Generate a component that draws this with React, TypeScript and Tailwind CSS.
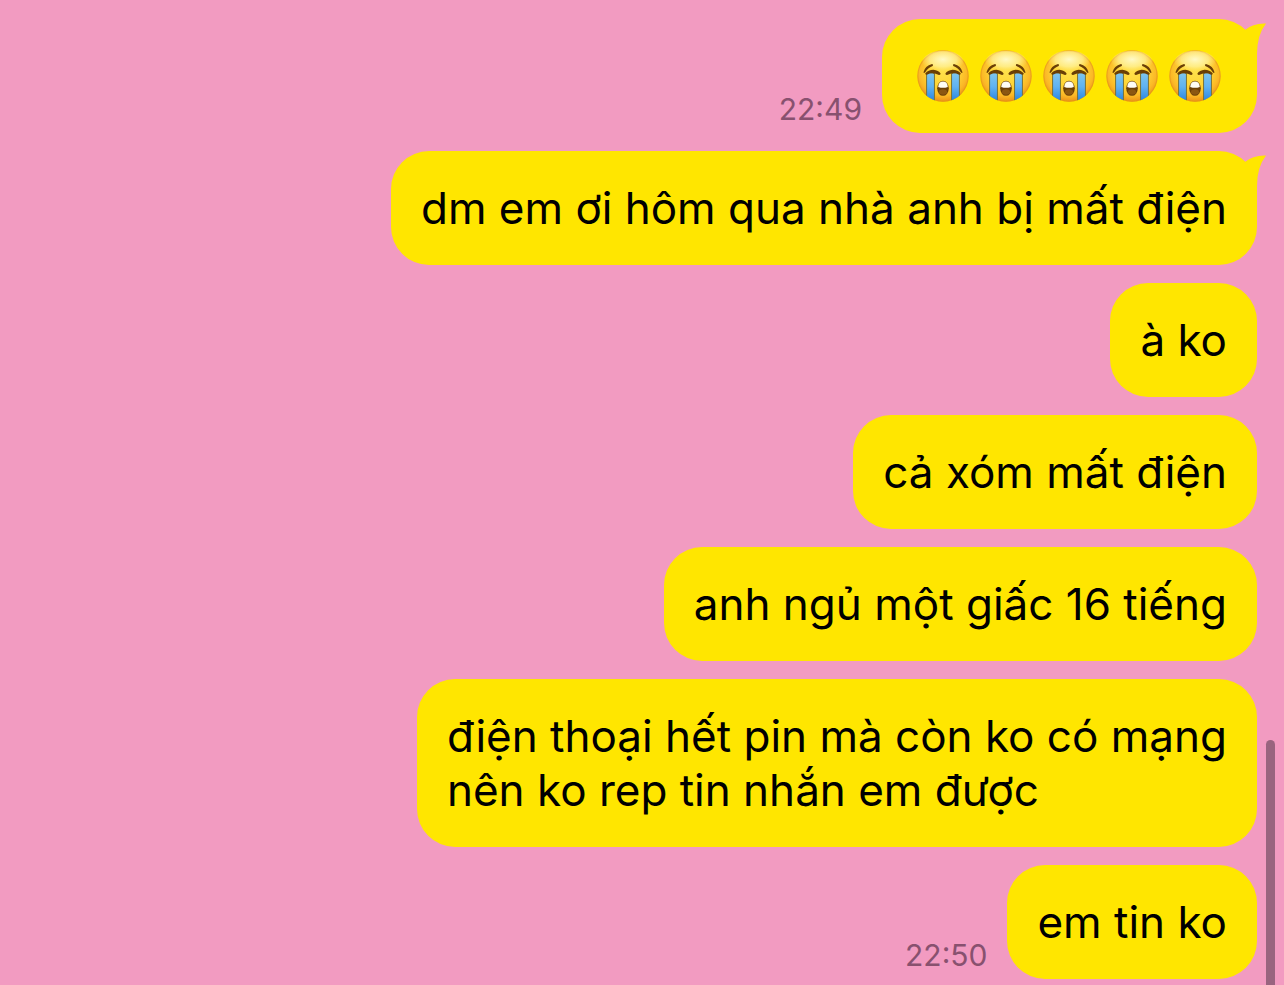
import { useId } from "react";

function CryingFace() {
  const id = useId().replace(/[^a-zA-Z0-9]/g, "");
  return (
    <svg viewBox="0 0 152 152" className="size-[52px]" aria-hidden="true">
      <defs>
        <radialGradient id={`${id}face`} cx="50%" cy="42%" r="60%">
          <stop offset="0" stopColor="#ffe04a" />
          <stop offset="0.5" stopColor="#ffd435" />
          <stop offset="0.78" stopColor="#fbb826" />
          <stop offset="1" stopColor="#ea8a14" />
        </radialGradient>
        <radialGradient id={`${id}shine`} cx="50%" cy="40%" r="55%">
          <stop offset="0" stopColor="#fffbd0" stopOpacity="0.95" />
          <stop offset="0.6" stopColor="#fff6a8" stopOpacity="0.65" />
          <stop offset="1" stopColor="#ffee80" stopOpacity="0" />
        </radialGradient>
        <linearGradient id={`${id}tear`} x1="0" y1="0" x2="0" y2="1">
          <stop offset="0" stopColor="#7fc6ee" />
          <stop offset="0.45" stopColor="#5fb2f2" />
          <stop offset="1" stopColor="#1f7bdc" />
        </linearGradient>
        <clipPath id={`${id}clip`}>
          <circle cx="76" cy="76" r="75" />
        </clipPath>
      </defs>
      <circle cx="76" cy="76" r="75" fill={`url(#${id}face)`} />
      <circle cx="76" cy="76" r="73.5" fill="none" stroke="#e0921c" strokeWidth="3" opacity="0.55" />
      <ellipse cx="76" cy="34" rx="60" ry="32" fill={`url(#${id}shine)`} />
      <g clipPath={`url(#${id}clip)`} stroke="#77743c" strokeWidth="3">
        <path d="M28 69 Q40 63 51 69 V158 H28Z" fill={`url(#${id}tear)`} />
        <path d="M101 69 Q112 63 124 69 V158 H101Z" fill={`url(#${id}tear)`} />
      </g>
      <g fill="#6a3f06">
        <path d="M19 65 Q23 47 44 41 Q49 42 46 47 Q33 51 24 65 Q20 69 19 65Z" />
        <path d="M133 65 Q129 47 108 41 Q103 42 106 47 Q119 51 128 65 Q132 69 133 65Z" />
        <path d="M24 69 Q33 58 48 58 Q63 60 69 69 Q69 74 64 73 Q46 64 29 72 Q24 73 24 69Z" />
        <path d="M128 69 Q119 58 104 58 Q89 60 83 69 Q83 74 88 73 Q106 64 123 72 Q128 73 128 69Z" />
      </g>
      <ellipse cx="76" cy="112" rx="17" ry="22" fill="#6b3f06" />
      <path d="M62 108 Q63 92 76 92 T90 108 Q76 113 62 108Z" fill="#fffdf5" />
      <ellipse cx="76" cy="123" rx="12" ry="8" fill="#8b5712" />
    </svg>
  );
}

function Tail() {
  return (
    <svg
      viewBox="0 0 26 40"
      className="absolute -right-[9px] top-[3px] h-10 w-[26px]"
      aria-hidden="true"
    >
      <path d="M5 8 Q13 1 26 1.5 Q17 13 17 32 V40 L2 20Z" fill="#ffe600" />
    </svg>
  );
}

type Message = { lines?: string[]; faces?: number; time?: string; tail?: boolean };

const messages: Message[] = [
  { faces: 5, time: "22:49", tail: true },
  { lines: ["dm em ơi hôm qua nhà anh bị mất điện"], tail: true },
  { lines: ["à ko"] },
  { lines: ["cả xóm mất điện"] },
  { lines: ["anh ngủ một giấc 16 tiếng"] },
  { lines: ["điện thoại hết pin mà còn ko có mạng", "nên ko rep tin nhắn em được"] },
  { lines: ["em tin ko"], time: "22:50" },
];

function Bubble({ message }: { message: Message }) {
  return (
    <li className="flex items-end justify-end gap-5">
      {message.time && (
        <time className="pb-1.5 text-[30px] leading-9 text-[#88516f]">{message.time}</time>
      )}
      <div className="relative rounded-[38px] bg-[#ffe600] p-[30px] text-[44px] leading-[54px] text-black">
        {message.tail && <Tail />}
        {message.faces && (
          <div className="flex h-[54px] items-center" role="img" aria-label="Loudly crying faces">
            {Array.from({ length: message.faces }, (_, i) => (
              <span key={i} className="flex w-[63px] pl-[5px]">
                <CryingFace />
              </span>
            ))}
          </div>
        )}
        {message.lines?.map((line) => (
          <p key={line}>{line}</p>
        ))}
      </div>
    </li>
  );
}

export default function App() {
  return (
    <main className="relative min-h-screen bg-[#f29bc1] pt-[19px] pr-[27px] pb-1.5 pl-6 font-['Inter',sans-serif]">
      <ol className="flex flex-col gap-[18px]">
        {messages.map((message, i) => (
          <Bubble key={i} message={message} />
        ))}
      </ol>
      <div className="absolute right-[9px] bottom-0 h-[245px] w-[9px] rounded-t-full bg-[#99647f]" />
    </main>
  );
}
